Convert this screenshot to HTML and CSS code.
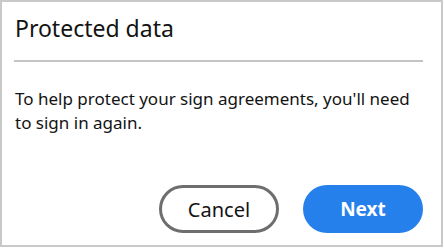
FILE: index.html
```html
<!DOCTYPE html>
<html>
<head>
<meta charset="utf-8">
<link rel="stylesheet" href="styles.css">
</head>
<body>
<div class="dialog">
  <h1 class="title">Protected data</h1>
  <hr class="divider">
  <p class="message">To help protect your sign agreements, you'll need to sign in again.</p>
  <div class="actions">
    <button class="btn btn-secondary">Cancel</button>
    <button class="btn btn-primary">Next</button>
  </div>
</div>
</body>
</html>
```
FILE: styles.css
```css
html, body {
  margin: 0;
  padding: 0;
  background: #ffffff;
}
.dialog {
  box-sizing: border-box;
  width: 443px;
  height: 247px;
  border: 2px solid #c9c9c9;
  padding: 0 18px 12px 13px;
  display: flex;
  flex-direction: column;
  font-family: "Noto Sans", sans-serif;
  color: #131313;
}
.title {
  margin: 11px 0 0 0;
  font-size: 23px;
  line-height: 30px;
  font-weight: 400;
}
.divider {
  margin: 17px 0 0 -1px;
  border: 0;
  height: 2px;
  background: #c4c4c4;
}
.message {
  margin: 25px 0 0 0;
  font-size: 17px;
  line-height: 24px;
}
.actions {
  margin-top: auto;
  display: flex;
  justify-content: flex-end;
  gap: 24px;
}
.btn {
  box-sizing: border-box;
  width: 120px;
  height: 48px;
  border-radius: 24px;
  font-family: inherit;
  font-size: 20px;
  cursor: pointer;
}
.btn-secondary {
  background: #ffffff;
  border: 3px solid #6e6e6e;
  color: #131313;
}
.btn-primary {
  background: #2680eb;
  border: 0;
  color: #ffffff;
  font-size: 19px;
  font-weight: 700;
}
```
